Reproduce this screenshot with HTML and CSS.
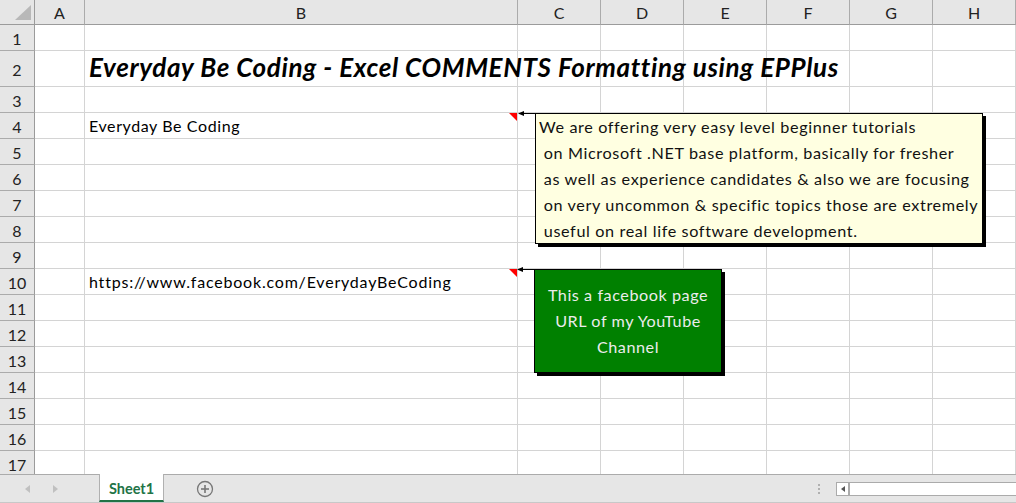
FILE: index.html
```html
<!DOCTYPE html>
<html>
<head>
<meta charset="utf-8">
<link rel="stylesheet" href="styles.css">
</head>
<body>
<div class="sheet">
  <div class="grid">
    <div class="hd corner"><svg width="18" height="17" viewBox="0 0 18 17"><polygon points="17,1 17,16 1,16" fill="#b8b8b8"/></svg></div>
    <div class="hd ch">A</div><div class="hd ch">B</div><div class="hd ch">C</div><div class="hd ch">D</div><div class="hd ch">E</div><div class="hd ch">F</div><div class="hd ch">G</div><div class="hd ch">H</div>

    <div class="hd rh">1</div><div></div><div></div><div></div><div></div><div></div><div></div><div></div><div></div>
    <div class="hd rh">2</div><div></div><div class="cell title">Everyday Be Coding - Excel COMMENTS Formatting using EPPlus</div><div></div><div></div><div></div><div></div><div></div><div></div>
    <div class="hd rh">3</div><div></div><div></div><div></div><div></div><div></div><div></div><div></div><div></div>
    <div class="hd rh">4</div><div></div><div class="cell">Everyday Be Coding<span class="marker"></span></div><div></div><div></div><div></div><div></div><div></div><div></div>
    <div class="hd rh">5</div><div></div><div></div><div></div><div></div><div></div><div></div><div></div><div></div>
    <div class="hd rh">6</div><div></div><div></div><div></div><div></div><div></div><div></div><div></div><div></div>
    <div class="hd rh">7</div><div></div><div></div><div></div><div></div><div></div><div></div><div></div><div></div>
    <div class="hd rh">8</div><div></div><div></div><div></div><div></div><div></div><div></div><div></div><div></div>
    <div class="hd rh">9</div><div></div><div></div><div></div><div></div><div></div><div></div><div></div><div></div>
    <div class="hd rh">10</div><div></div><div class="cell url">https://www.facebook.com/EverydayBeCoding<span class="marker"></span></div><div></div><div></div><div></div><div></div><div></div><div></div>
    <div class="hd rh">11</div><div></div><div></div><div></div><div></div><div></div><div></div><div></div><div></div>
    <div class="hd rh">12</div><div></div><div></div><div></div><div></div><div></div><div></div><div></div><div></div>
    <div class="hd rh">13</div><div></div><div></div><div></div><div></div><div></div><div></div><div></div><div></div>
    <div class="hd rh">14</div><div></div><div></div><div></div><div></div><div></div><div></div><div></div><div></div>
    <div class="hd rh">15</div><div></div><div></div><div></div><div></div><div></div><div></div><div></div><div></div>
    <div class="hd rh">16</div><div></div><div></div><div></div><div></div><div></div><div></div><div></div><div></div>
    <div class="hd rh">17</div><div></div><div></div><div></div><div></div><div></div><div></div><div></div><div></div>
  </div>

  <div class="comment note">
    <svg class="pointer" width="18" height="8" viewBox="0 0 18 8"><line x1="4" y1="2.5" x2="18" y2="2.5" stroke="#000" stroke-width="1"/><polygon points="0,2.5 6,0 6,5" fill="#000"/></svg>
    <div class="note-text">We are offering very easy level beginner tutorials
 on Microsoft .NET base platform, basically for fresher
 as well as experience candidates &amp; also we are focusing
 on very uncommon &amp; specific topics those are extremely
 useful on real life software development.</div>
  </div>

  <div class="comment green">
    <svg class="pointer" width="18" height="8" viewBox="0 0 18 8"><line x1="4" y1="2.5" x2="18" y2="2.5" stroke="#000" stroke-width="1"/><polygon points="0,2.5 6,0 6,5" fill="#000"/></svg>
    <div class="green-text">This a facebook page<br>URL of my YouTube<br>Channel</div>
  </div>
</div>

<div class="tabbar">
  <div class="nav">
    <span class="tri left"></span>
    <span class="tri right"></span>
  </div>
  <div class="tab">Sheet1</div>
  <div class="add"><svg width="18" height="18" viewBox="0 0 18 18"><circle cx="9" cy="9" r="7.5" fill="none" stroke="#777" stroke-width="1.3"/><line x1="5" y1="9" x2="13" y2="9" stroke="#777" stroke-width="1.6"/><line x1="9" y1="5" x2="9" y2="13" stroke="#777" stroke-width="1.6"/></svg></div>
  <div class="spacer"></div>
  <div class="dots"><i></i><i></i><i></i></div>
  <div class="hscroll">
    <div class="sbtn"><span class="tri left dark"></span></div>
    <div class="track"></div>
  </div>
</div>
</body>
</html>
```
FILE: styles.css
```css
html, body {
  margin: 0;
  padding: 0;
}
body {
  width: 1016px;
  height: 503px;
  overflow: hidden;
  background: #fff;
  font-family: Lato, "Liberation Sans", sans-serif;
  color: #000;
}
.sheet {
  position: relative;
  height: 474px;
  overflow: hidden;
}
.grid {
  display: grid;
  grid-template-columns: 35px 50px 433px repeat(6, 83px);
  grid-template-rows: 25px 26px 36px repeat(15, 26px);
}
.grid > div {
  box-sizing: border-box;
  border-right: 1px solid #d4d4d4;
  border-bottom: 1px solid #d4d4d4;
  min-width: 0;
}
.grid > .hd {
  background: #e6e6e6;
  border-right-color: #ababab;
  border-bottom-color: #ababab;
  display: flex;
  align-items: center;
  justify-content: center;
  font-size: 16px;
  color: #222;
}
.grid > .ch {
  border-bottom-color: #9b9b9b;
  padding-top: 1px;
}
.grid > .rh {
  border-right-color: #9b9b9b;
  padding-top: 1px;
}
.grid > .corner {
  justify-content: flex-end;
  align-items: flex-end;
  padding: 0 2px 3px 0;
  border-bottom-color: #9b9b9b;
  border-right-color: #9b9b9b;
}
.corner svg {
  display: block;
}
.cell {
  position: relative;
  display: flex;
  align-items: flex-end;
  padding: 0 0 3px 4px;
  font-size: 16px;
  letter-spacing: 0.6px;
  white-space: nowrap;
  overflow: visible;
}
.cell.url {
  letter-spacing: 0.8px;
}
.cell.title {
  font-size: 26px;
  font-weight: bold;
  font-style: italic;
  padding-bottom: 3px;
  letter-spacing: 0.63px;
}
.marker {
  position: absolute;
  top: 0;
  right: 0;
  width: 0;
  height: 0;
  border-top: 8px solid #ff0000;
  border-left: 8px solid transparent;
}
.comment {
  position: absolute;
  box-sizing: border-box;
  border: 1px solid #000;
  box-shadow: 3px 3px 0 #000;
}
.pointer {
  position: absolute;
  left: -18px;
  top: -3.5px;
}
.note {
  left: 535px;
  top: 113px;
  width: 448px;
  height: 131px;
  background: #ffffe1;
  padding: 0 0 0 3px;
}
.note-text {
  white-space: pre;
  font-size: 16.2px;
  letter-spacing: 0.62px;
  line-height: 25.9px;
  color: #111;
}
.green {
  left: 534px;
  top: 269px;
  width: 188px;
  height: 104px;
  background: #008000;
  padding-top: 12px;
}
.green-text {
  text-align: center;
  font-size: 16.2px;
  letter-spacing: 0.55px;
  line-height: 26px;
  color: #ececec;
}
.tabbar {
  box-sizing: border-box;
  height: 29px;
  background: #e6e6e6;
  border-top: 1px solid #ababab;
  border-bottom: 1px solid #c8c8c8;
  display: flex;
  align-items: stretch;
}
.nav {
  width: 99px;
  display: flex;
  align-items: center;
  padding-left: 25px;
  gap: 23px;
  box-sizing: border-box;
}
.tri {
  width: 0;
  height: 0;
  border-top: 4px solid transparent;
  border-bottom: 4px solid transparent;
}
.tri.left {
  border-right: 5px solid #c0c0c0;
}
.tri.right {
  border-left: 5px solid #c0c0c0;
}
.tri.dark.left {
  border-right-color: #555;
}
.tab {
  width: 65px;
  box-sizing: border-box;
  margin-top: -1px;
  background: #fff;
  border-left: 1px solid #b0b0b0;
  border-right: 1px solid #b0b0b0;
  border-bottom: 2px solid #217346;
  color: #217346;
  font-weight: bold;
  font-size: 14.5px;
  display: flex;
  align-items: center;
  justify-content: center;
  padding-top: 2px;
}
.add {
  margin-left: 32px;
  display: flex;
  align-items: center;
}
.add svg {
  display: block;
}
.spacer {
  flex: 1;
}
.dots {
  display: flex;
  flex-direction: column;
  justify-content: center;
  gap: 2px;
  margin-right: 16px;
}
.dots i {
  display: block;
  width: 2px;
  height: 2px;
  background: #b0b0b0;
}
.hscroll {
  width: 180px;
  display: flex;
  align-items: center;
}
.sbtn {
  box-sizing: border-box;
  width: 14px;
  height: 14px;
  background: #fff;
  border: 1px solid #ababab;
  border-right: 2px solid #ababab;
  display: flex;
  align-items: center;
  justify-content: center;
}
.sbtn .tri {
  border-top-width: 3px;
  border-bottom-width: 3px;
  border-right-width: 4px;
}
.track {
  flex: 1;
  height: 14px;
  box-sizing: border-box;
  background: #fff;
  border-top: 1px solid #ababab;
  border-bottom: 1px solid #ababab;
}
```
